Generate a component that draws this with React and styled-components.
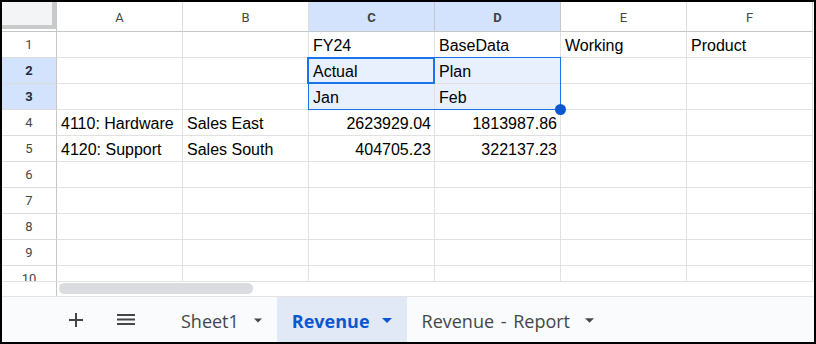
import React from "react";
import styled, { createGlobalStyle } from "styled-components";

const Global = createGlobalStyle`
  html, body { margin: 0; padding: 0; background: #fff; }
  body { font-family: "Liberation Sans", Arial, sans-serif; }
`;

const Frame = styled.div`
  box-sizing: border-box;
  width: 816px;
  height: 344px;
  border: 2px solid #000;
  background: #fff;
  display: flex;
  flex-direction: column;
  overflow: hidden;
`;

const GridArea = styled.div`
  position: relative;
  height: 279px;
  overflow: hidden;
  flex: none;
`;

const Grid = styled.div`
  display: grid;
  grid-template-columns: 55px repeat(6, 126px);
  grid-template-rows: 30px repeat(10, 26px);
`;

const Corner = styled.div`
  box-sizing: border-box;
  border-right: 1px solid #c4c7c5;
  border-bottom: 1px solid #c4c7c5;
  padding-bottom: 2px;
  display: flex;
`;

const CornerBlock = styled.div`
  flex: 1;
  background: #f3f4f5;
  border-right: 4px solid #c7c9cb;
  border-bottom: 4px solid #c7c9cb;
`;

const ColHeader = styled.div`
  box-sizing: border-box;
  border-right: 1px solid ${(p) => (p.$selected ? "#c4c7c5" : "#dcdcdc")};
  border-bottom: 1px solid #c4c7c5;
  background: ${(p) => (p.$selected ? "#d3e3fd" : "#fff")};
  color: ${(p) => (p.$selected ? "#3c4043" : "#444746")};
  font-family: Roboto, "Liberation Sans", sans-serif;
  font-size: 13px;
  font-weight: ${(p) => (p.$selected ? 700 : 400)};
  display: flex;
  align-items: center;
  justify-content: center;
  padding-top: 1px;
`;

const RowHeader = styled.div`
  box-sizing: border-box;
  border-right: 1px solid #c4c7c5;
  border-bottom: 1px solid #dcdcdc;
  background: ${(p) => (p.$selected ? "#d3e3fd" : "#fff")};
  color: ${(p) => (p.$selected ? "#1f2a44" : "#444746")};
  font-family: Roboto, "Liberation Sans", sans-serif;
  font-size: 13px;
  font-weight: ${(p) => (p.$selected ? 700 : 400)};
  display: flex;
  align-items: center;
  justify-content: center;
`;

const Cell = styled.div`
  box-sizing: border-box;
  border-right: 1px solid #e1e1e1;
  border-bottom: 1px solid #e1e1e1;
  background: ${(p) => (p.$selected ? "#e8f0fe" : "#fff")};
  font-family: "Liberation Sans", Arial, sans-serif;
  font-size: 16px;
  color: #000;
  padding: 0 3px 2px 4px;
  display: flex;
  align-items: flex-end;
  justify-content: ${(p) => (p.$num ? "flex-end" : "flex-start")};
  white-space: nowrap;
  overflow: hidden;
`;

const RangeBox = styled.div`
  position: absolute;
  left: 306px;
  top: 55px;
  width: 253px;
  height: 53px;
  box-sizing: border-box;
  border: 1px solid #1a73e8;
  pointer-events: none;
`;

const ActiveBox = styled.div`
  position: absolute;
  left: 305px;
  top: 55px;
  width: 128px;
  height: 27px;
  box-sizing: border-box;
  border: 2px solid #1a73e8;
  pointer-events: none;
`;

const Handle = styled.div`
  position: absolute;
  left: 553px;
  top: 102px;
  width: 11px;
  height: 11px;
  border-radius: 50%;
  background: #0b57d0;
`;

const ScrollStrip = styled.div`
  flex: none;
  height: 14px;
  border-top: 1px solid #e1e1e1;
  display: flex;
`;

const ScrollLeft = styled.div`
  width: 54px;
  border-right: 1px solid #c4c7c5;
`;

const ScrollTrack = styled.div`
  flex: 1;
  padding: 1px 0 0 2px;
`;

const Thumb = styled.div`
  width: 194px;
  height: 11px;
  border-radius: 6px;
  background: #dadce0;
`;

const TabBar = styled.div`
  flex: 1;
  border-top: 1px solid #e3e3e3;
  background: #f9fbfd;
  display: flex;
  align-items: stretch;
  padding-left: 56px;
`;

const IconButton = styled.div`
  width: 36px;
  display: flex;
  align-items: center;
  justify-content: center;
  margin-right: ${(p) => p.$mr || 0}px;
  color: #444746;
`;

const Tab = styled.div`
  display: flex;
  align-items: center;
  gap: ${(p) => p.$gap}px;
  padding: 0 15px 0 ${(p) => p.$pl}px;
  background: ${(p) => (p.$active ? "#e1e9f7" : "transparent")};
  color: ${(p) => (p.$active ? "#0b57d0" : "#444746")};
  font-family: "Open Sans", Roboto, sans-serif;
  font-size: 18px;
  font-weight: ${(p) => (p.$active ? 700 : 500)};
  word-spacing: 2px;
  white-space: nowrap;
  padding-top: 2px;
`;

const Caret = ({ w = 9 }) => (
  <svg width={w} height="5" viewBox="0 0 10 5" style={{ display: "block" }}>
    <path d="M0 0 L10 0 L5 5 Z" fill="currentColor" />
  </svg>
);

const PlusIcon = () => (
  <svg width="14" height="14" viewBox="0 0 14 14">
    <path d="M7 0 V14 M0 7 H14" stroke="currentColor" strokeWidth="2" />
  </svg>
);

const MenuIcon = () => (
  <svg width="18" height="12" viewBox="0 0 18 12">
    <path d="M0 1 H18 M0 5.5 H18 M0 10 H18" stroke="currentColor" strokeWidth="1.8" />
  </svg>
);

const cols = ["A", "B", "C", "D", "E", "F"];
const rows = [
  ["", "", "FY24", "BaseData", "Working", "Product"],
  ["", "", "Actual", "Plan", "", ""],
  ["", "", "Jan", "Feb", "", ""],
  ["4110: Hardware", "Sales East", "2623929.04", "1813987.86", "", ""],
  ["4120: Support", "Sales South", "404705.23", "322137.23", "", ""],
  ["", "", "", "", "", ""],
  ["", "", "", "", "", ""],
  ["", "", "", "", "", ""],
  ["", "", "", "", "", ""],
  ["", "", "", "", "", ""],
];

const isNum = (v) => /^[\d.]+$/.test(v);
const selRows = [2, 3];
const selCols = [2, 3];

export default function App() {
  return (
    <>
      <Global />
      <Frame>
        <GridArea>
          <Grid>
            <Corner>
              <CornerBlock />
            </Corner>
            {cols.map((c, i) => (
              <ColHeader key={c} $selected={selCols.includes(i)}>
                {c}
              </ColHeader>
            ))}
            {rows.map((r, ri) => (
              <React.Fragment key={ri}>
                <RowHeader $selected={selRows.includes(ri + 1)}>{ri + 1}</RowHeader>
                {r.map((v, ci) => (
                  <Cell
                    key={ci}
                    $num={isNum(v)}
                    $selected={selRows.includes(ri + 1) && selCols.includes(ci)}
                  >
                    {v}
                  </Cell>
                ))}
              </React.Fragment>
            ))}
          </Grid>
          <RangeBox />
          <ActiveBox />
          <Handle />
        </GridArea>
        <ScrollStrip>
          <ScrollLeft />
          <ScrollTrack>
            <Thumb />
          </ScrollTrack>
        </ScrollStrip>
        <TabBar>
          <IconButton $mr={14}>
            <PlusIcon />
          </IconButton>
          <IconButton $mr={21}>
            <MenuIcon />
          </IconButton>
          <Tab $pl={16} $gap={15}>
            Sheet1 <Caret w={8} />
          </Tab>
          <Tab $pl={15} $gap={12} $active>
            Revenue <Caret w={10} />
          </Tab>
          <Tab $pl={15} $gap={15}>
            Revenue - Report <Caret w={9} />
          </Tab>
        </TabBar>
      </Frame>
    </>
  );
}
